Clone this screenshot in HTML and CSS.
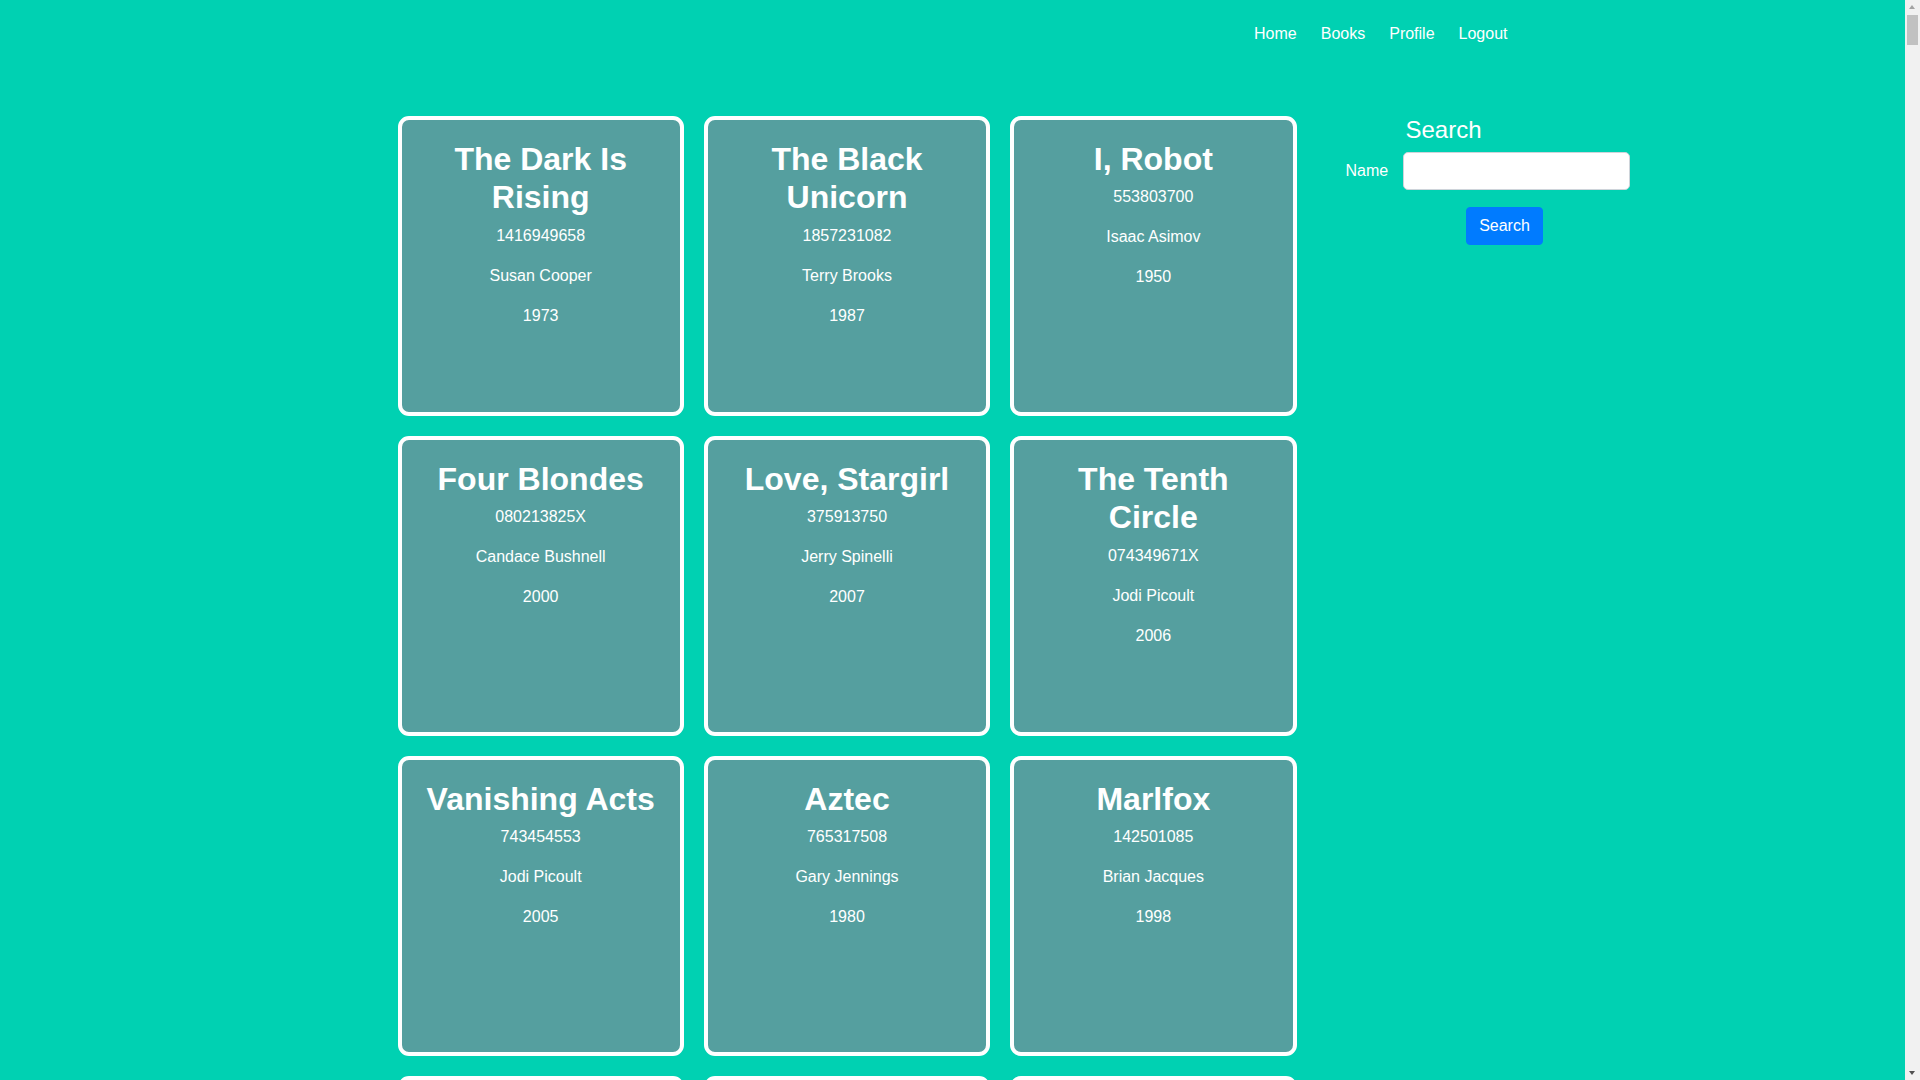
FILE: index.html
```html
<!DOCTYPE html>
<html lang="en">
<head>
<meta charset="utf-8">
<title>Books</title>
<link rel="stylesheet" href="styles.css">
</head>
<body>
<nav class="navbar">
  <div class="container nav-inner">
    <a class="nav-link" href="#">Home</a>
    <a class="nav-link" href="#">Books</a>
    <a class="nav-link" href="#">Profile</a>
    <a class="nav-link" href="#">Logout</a>
  </div>
</nav>
<main class="container">
  <div class="layout">
    <section class="books">
      <div class="card"><h2>The Dark Is Rising</h2><p>1416949658</p><p>Susan Cooper</p><p>1973</p></div>
      <div class="card"><h2>The Black Unicorn</h2><p>1857231082</p><p>Terry Brooks</p><p>1987</p></div>
      <div class="card"><h2>I, Robot</h2><p>553803700</p><p>Isaac Asimov</p><p>1950</p></div>
      <div class="card"><h2>Four Blondes</h2><p>080213825X</p><p>Candace Bushnell</p><p>2000</p></div>
      <div class="card"><h2>Love, Stargirl</h2><p>375913750</p><p>Jerry Spinelli</p><p>2007</p></div>
      <div class="card"><h2>The Tenth Circle</h2><p>074349671X</p><p>Jodi Picoult</p><p>2006</p></div>
      <div class="card"><h2>Vanishing Acts</h2><p>743454553</p><p>Jodi Picoult</p><p>2005</p></div>
      <div class="card"><h2>Aztec</h2><p>765317508</p><p>Gary Jennings</p><p>1980</p></div>
      <div class="card"><h2>Marlfox</h2><p>142501085</p><p>Brian Jacques</p><p>1998</p></div>
      <div class="card"><h2>The Testament</h2><p>440234743</p><p>John Grisham</p><p>1999</p></div>
      <div class="card"><h2>Dune</h2><p>441172717</p><p>Frank Herbert</p><p>1965</p></div>
      <div class="card"><h2>Emma</h2><p>141439580</p><p>Jane Austen</p><p>1815</p></div>
    </section>
    <aside class="sidebar">
      <h4 class="search-title">Search</h4>
      <form class="search-form">
        <div class="form-row">
          <label class="form-label" for="name">Name</label>
          <input class="form-control" id="name" type="text">
        </div>
        <div class="form-actions">
          <button class="btn-primary" type="button">Search</button>
        </div>
      </form>
    </aside>
  </div>
</main>
<div class="fake-scrollbar" aria-hidden="true">
  <span class="sb-arrow sb-up"></span>
  <span class="sb-thumb"></span>
  <span class="sb-arrow sb-down"></span>
</div>
</body>
</html>
```
FILE: styles.css
```css
* { box-sizing: border-box; }
html, body {
  margin: 0;
  padding: 0;
}
body {
  background: #00d1b2;
  color: #ffffff;
  font-family: "Liberation Sans", Arial, sans-serif;
  font-size: 16px;
  line-height: 1.5;
  padding-right: 15px;
}
.container {
  width: 1140px;
  margin: 0 auto;
  padding: 0 15px;
}
.navbar {
  height: 68px;
}
.nav-inner {
  height: 68px;
  display: flex;
  align-items: center;
  justify-content: flex-end;
  gap: 24px;
}
.nav-link {
  color: #ffffff;
  text-decoration: none;
  font-size: 16px;
}
main.container {
  padding-top: 48px;
}
.layout {
  display: flex;
  align-items: flex-start;
}
.books {
  flex: 0 0 899px;
  display: grid;
  grid-template-columns: repeat(3, 1fr);
  gap: 20px;
}
.card {
  height: 300px;
  background: #559f9f;
  border: 4px solid #ffffff;
  border-radius: 11px;
  padding: 20px;
  text-align: center;
}
.card h2 {
  margin: 0 0 7px;
  font-size: 32px;
  font-weight: 700;
  line-height: 1.2;
}
.card p {
  margin: 0 0 16px;
  line-height: 1.5;
}
.sidebar {
  flex: 0 0 368px;
  margin-left: 24px;
}
.search-title {
  margin: 0 0 7px 85px;
  font-size: 24px;
  font-weight: 400;
  line-height: 1.2;
}
.form-row {
  display: flex;
  align-items: center;
  padding-left: 25px;
}
.form-label {
  width: 57px;
}
.form-control {
  width: 227px;
  height: 38px;
  border: 1px solid #ced4da;
  border-radius: 5px;
  background: #ffffff;
  padding: 6px 12px;
  font-size: 16px;
}
.form-actions {
  display: flex;
  justify-content: center;
  margin-top: 17px;
}
.btn-primary {
  background: #007bff;
  color: #ffffff;
  border: 1px solid #007bff;
  border-radius: 4px;
  padding: 6px 12px;
  font-family: "Liberation Sans", Arial, sans-serif;
  font-size: 16px;
  line-height: 1.5;
  height: 38px;
}
.fake-scrollbar {
  position: fixed;
  top: 0;
  right: 0;
  width: 15px;
  height: 100vh;
  background: #f1f1f1;
}
.sb-thumb {
  position: absolute;
  left: 2px;
  top: 15px;
  width: 11px;
  height: 30px;
  background: #c1c1c1;
}
.sb-arrow {
  position: absolute;
  left: 4px;
  width: 0;
  height: 0;
  border-left: 3.5px solid transparent;
  border-right: 3.5px solid transparent;
}
.sb-up {
  top: 5px;
  border-bottom: 4px solid #a3a3a3;
}
.sb-down {
  bottom: 5px;
  border-top: 4px solid #505050;
}
```
